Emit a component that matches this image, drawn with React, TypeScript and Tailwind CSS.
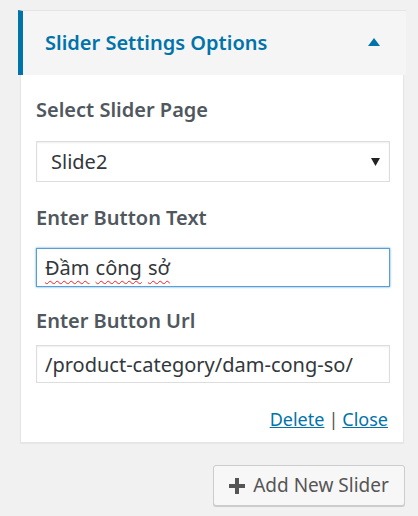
import React from "react";

export default function App() {
  const [url, setUrl] = React.useState("/product-category/dam-cong-so/");
  const words = ["Đầm", "công", "sở"];

  return (
    <div
      className="min-h-[516px] w-[418px] bg-[#f1f1f1] pt-[10px] pl-[18px]"
      style={{ fontFamily: '"Noto Sans", "Open Sans", sans-serif' }}
    >
      <div className="w-[388px]">
        <div className="flex h-[65px] items-center justify-between border-l-[5px] border-t border-[#0073aa] border-t-[#e5e5e5] bg-[#f5f5f5] pl-[22px] pr-[26px]">
          <h3 className="text-[20px] leading-[24px] font-semibold text-[#0073aa]">Slider Settings Options</h3>
          <svg width="12" height="8" viewBox="0 0 12 8" className="mt-[-2px]">
            <path d="M6 0 L12 8 L0 8 Z" fill="#0073aa" />
          </svg>
        </div>

        <div className="mx-[2px] border border-t-0 border-[#e5e5e5] bg-white px-[15px] pt-[23px] pb-[11px] shadow-[0_1px_1px_rgba(0,0,0,0.04)]">
          <label className="block text-[20px] leading-[24px] font-semibold text-[#50575e]">Select Slider Page</label>
          <div className="relative mt-[19px] flex h-[41px] w-[354px] items-center border border-[#ddd] bg-white pl-[14px] shadow-[inset_0_1px_2px_rgba(0,0,0,0.07)]">
            <span className="text-[20px] leading-[24px] text-[#32373c]">Slide2</span>
            <svg width="9" height="8" viewBox="0 0 9 8" className="absolute right-[9px] top-[16px]">
              <path d="M0 0 L9 0 L4.5 8 Z" fill="#222" />
            </svg>
          </div>

          <label className="mt-[24px] block text-[20px] leading-[24px] font-semibold text-[#50575e]">Enter Button Text</label>
          <div className="mt-[18px] flex h-[39px] w-[354px] items-center gap-[6px] border border-[#5b9dd9] px-[8px] text-[20px] leading-[24px] text-[#32373c] shadow-[0_0_2px_rgba(30,140,190,0.8)]">
            {words.map((w) => (
              <span key={w} className="underline decoration-wavy decoration-[#e22] decoration-1 underline-offset-[5px]">
                {w}
              </span>
            ))}
          </div>

          <label className="mt-[22px] block text-[20px] leading-[24px] font-semibold text-[#50575e]">Enter Button Url</label>
          <input
            value={url}
            onChange={(e) => setUrl(e.target.value)}
            className="mt-[12px] block h-[38px] w-[354px] border border-[#ddd] px-[8px] text-[20px] text-[#32373c] shadow-[inset_0_1px_2px_rgba(0,0,0,0.07)] outline-none"
          />

          <div className="mt-[24px] flex justify-end text-[18px] leading-[24px] text-[#555]">
            <a href="#" className="text-[#0073aa] underline">Delete</a>
            <span className="mx-[4px]">|</span>
            <a href="#" className="text-[#0073aa] underline">Close</a>
          </div>
        </div>
      </div>

      <div className="mt-[22px] flex w-[387px] justify-end">
        <button className="flex h-[41px] w-[192px] items-center justify-center gap-[8px] rounded-[3px] border border-[#ccc] bg-[#f7f7f7] text-[19px] text-[#555] shadow-[0_1px_0_#ccc]">
          <svg width="16" height="16" viewBox="0 0 16 16">
            <path d="M6 0h4v6h6v4h-6v6H6v-6H0V6h6z" fill="#555" />
          </svg>
          Add New Slider
        </button>
      </div>
    </div>
  );
}
